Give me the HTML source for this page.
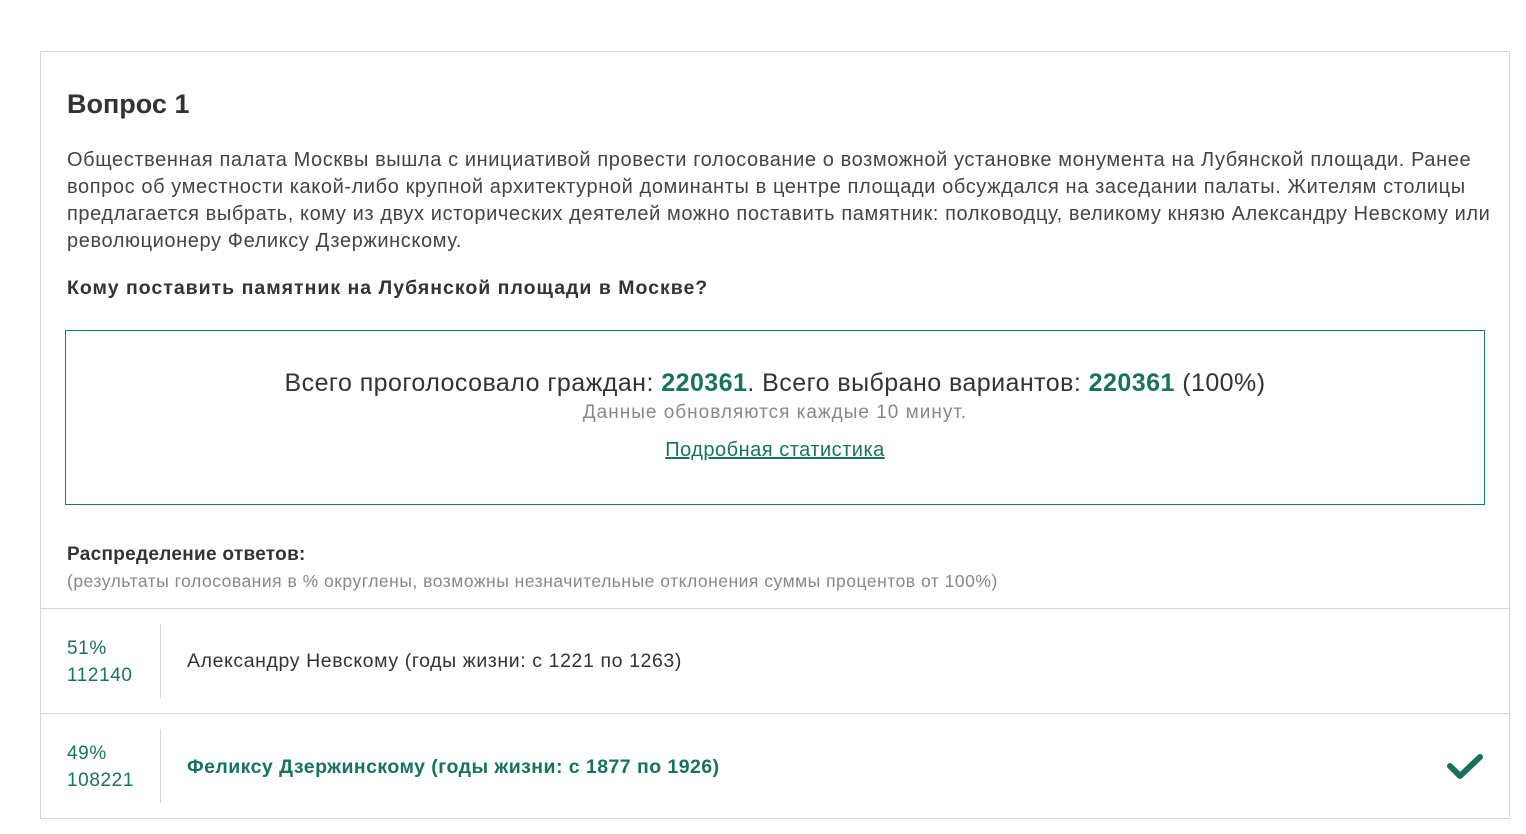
<!DOCTYPE html>
<html><head><meta charset="utf-8"><style>
body{margin:0;background:#fff;font-family:"Liberation Sans","DejaVu Sans",sans-serif;color:#333;}
.box{position:absolute;left:40px;top:51px;width:1468px;height:766px;border:1px solid #d6d6d6;}
h1{position:absolute;left:26px;top:37px;margin:0;font-size:27px;font-weight:bold;color:#333;}
.p{position:absolute;left:26px;top:95px;width:1440px;font-size:20px;letter-spacing:0.6px;line-height:27px;color:#444;}
.q{position:absolute;left:26px;top:225px;font-size:19.5px;letter-spacing:1px;font-weight:bold;color:#333;}
.stat{position:absolute;left:24px;top:278px;width:1418px;height:173px;border:1px solid #1d7a6e;text-align:center;}
.s1{margin-top:38px;font-size:25px;letter-spacing:0.45px;color:#333;}
.s1 b{color:#17735f;}
.s2{font-size:19px;letter-spacing:1px;color:#888;margin-top:4px;}
.s3{font-size:20px;letter-spacing:0.5px;color:#17735f;text-decoration:underline;margin-top:15px;}
.d1{position:absolute;left:26px;top:492px;font-size:19px;letter-spacing:0.3px;font-weight:bold;color:#333;}
.d2{position:absolute;left:26px;top:519px;font-size:17.5px;letter-spacing:0.5px;color:#888;}
.row{position:absolute;left:0;width:1468px;height:104px;border-top:1px solid #d6d6d6;}
.num{position:absolute;left:26px;top:26px;font-size:19px;letter-spacing:0.6px;line-height:27px;color:#17735f;}
.sep{position:absolute;left:119px;top:15px;width:1px;height:74px;background:#d6d6d6;}
.ans{position:absolute;left:146px;top:41px;font-size:19.5px;letter-spacing:0.6px;color:#333;}
</style></head><body>
<div class="box">
<h1>Вопрос 1</h1>
<div class="p">Общественная палата Москвы вышла с инициативой провести голосование о возможной установке монумента на Лубянской площади. Ранее вопрос об уместности какой-либо крупной архитектурной доминанты в центре площади обсуждался на заседании палаты. Жителям столицы предлагается выбрать, кому из двух исторических деятелей можно поставить памятник: полководцу, великому князю Александру Невскому или революционеру Феликсу Дзержинскому.</div>
<div class="q">Кому поставить памятник на Лубянской площади в Москве?</div>
<div class="stat">
<div class="s1">Всего проголосовало граждан: <b>220361</b>. Всего выбрано вариантов: <b>220361</b> (100%)</div>
<div class="s2">Данные обновляются каждые 10 минут.</div>
<div class="s3">Подробная статистика</div>
</div>
<div class="d1">Распределение ответов:</div>
<div class="d2">(результаты голосования в % округлены, возможны незначительные отклонения суммы процентов от 100%)</div>
<div class="row" style="top:556px"><div class="num">51%<br>112140</div><div class="sep"></div><div class="ans">Александру Невскому (годы жизни: с 1221 по 1263)</div></div>
<div class="row" style="top:661px"><div class="num">49%<br>108221</div><div class="sep"></div><div class="ans" style="font-weight:bold;color:#17735f;letter-spacing:0.45px;top:42px">Феликсу Дзержинскому (годы жизни: с 1877 по 1926)</div>
<svg style="position:absolute;left:1405px;top:38px" width="40" height="30" viewBox="0 0 40 30"><path d="M4 14 L14 24 L34 5" fill="none" stroke="#17735f" stroke-width="6" stroke-linecap="round" stroke-linejoin="round"/></svg></div>
</div>
</body></html>
